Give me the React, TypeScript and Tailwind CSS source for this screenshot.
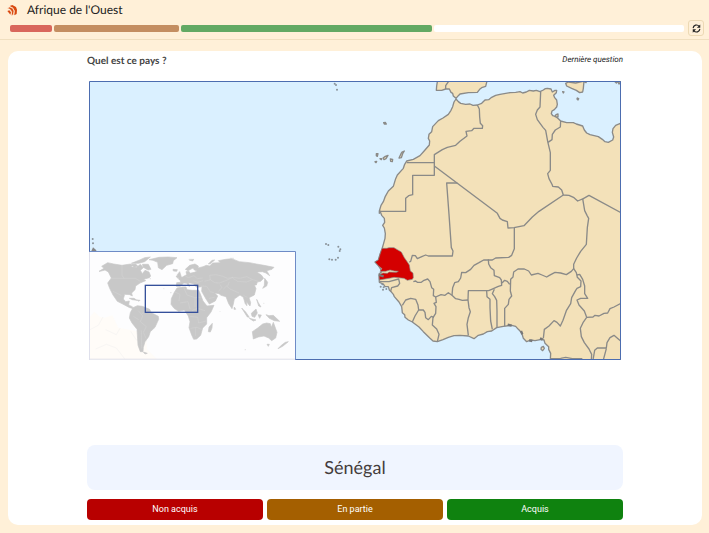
import React, { useState } from 'react';

type Segment = {
  name: string;
  className: string;
};

const SEGMENTS: Segment[] = [
  { name: 'non-acquis', className: 'grow-1 bg-[#d9675c]' },
  { name: 'en-partie', className: 'grow-3 bg-[#c48e61]' },
  { name: 'acquis', className: 'grow-6 bg-[#63a963]' },
  { name: 'reste', className: 'grow-6 bg-white' },
];

const REPONSES = [
  { label: 'Non acquis', className: 'bg-[#b80000]' },
  { label: 'En partie', className: 'bg-[#a45f00]' },
  { label: 'Acquis', className: 'bg-[#0f820f]' },
];

const AFRIQUE =
  'M1101 54L1108 62L1115 67L1130 70L1143 69L1152 73L1165 72L1178 67L1188 57L1199 56L1208 49L1220 43L1233 40L1263 35L1280 34L1293 32L1301 36L1312 33L1321 28L1333 30L1342 28L1353 32L1363 27L1369 23L1375 22L1386 24L1390 33L1398 28L1403 28L1402 35L1394 43L1397 50L1403 57L1405 70L1403 78L1396 86L1389 90L1387 98L1391 104L1399 106L1408 113L1415 120L1433 125L1453 125L1462 129L1481 135L1486 147L1493 156L1503 161L1528 167L1540 175L1548 182L1558 184L1571 177L1574 168L1570 154L1572 143L1580 133L1596 126V837H1384L1385 817L1379 805L1379 797L1368 787L1365 777L1358 775L1338 779L1325 777L1313 782L1303 772L1298 755L1288 745L1280 736L1268 733L1243 736L1223 740L1208 750L1195 752L1183 759L1168 763L1155 773L1138 765L1113 763L1095 764L1078 769L1062 776L1045 782L1032 780L1023 772L1003 752L990 738L970 723L958 717L948 709L947 701L940 695L938 677L930 663L916 647L913 640L908 634L901 627L898 617L888 617L883 609L871 604L870 579L878 572L875 564L868 554L858 543L868 537L873 520L879 504L883 490L888 472L889 458L886 441L881 433L887 424L886 412L878 403L873 390L871 397L871 390L876 373L883 362L889 346L898 330L913 316L920 293L925 282L943 262L947 250L953 240L973 235L993 224L1008 207L1021 192L1022 180L1018 172L1020 160L1028 152L1031 137L1048 119L1062 111L1078 100L1086 88L1091 77L1095 63Z';

const IBERIE =
  'M1046 -4L1043 15L1042 28L1058 28L1070 24L1081 24L1086 34L1091 37L1093 45L1101 52L1108 44L1113 39L1138 35L1165 34L1172 25L1178 20L1190 16L1195 -4Z';

const SENEGAL =
  'M858 543L868 537L873 520L879 502L893 502L900 500L915 500L925 506L937 513L946 530L953 540L961 552L964 570L972 576L973 590L970 595L955 598L945 592L915 589L905 591L871 597L870 581L882 576L895 577L900 573L922 574L928 571L916 570L903 567L890 571L873 571L879 563L868 554Z';

// Frontières terrestres
const FRONTIERES = [
  'M1081 -2L1070 14L1070 24',
  'M1165 72L1171 84L1172 108L1174 127L1181 134L1180 142L1155 142L1148 149L1131 151L1134 165L1113 181L1100 193L1075 199L1060 206L1036 221V283H971V341L959 344L950 352V391H871',
  'M953 245H1036M1036 255L1225 397L1233 412L1240 417L1255 422L1257 441L1275 440L1305 434L1330 408L1350 391L1423 342',
  'M1105 306H1073L1080 400L1087 500L1092 510L1090 525H1018L1010 522L1000 526L985 533L979 524L970 523L965 541L961 544',
  'M1355 32L1353 78L1345 87L1340 100L1345 116L1362 139L1370 148L1376 181L1384 215L1384 268L1376 278L1380 293L1390 312L1391 316L1408 318L1418 327L1423 342L1440 343L1455 350L1466 360L1483 353L1500 343L1596 395',
  'M1415 120L1414 138L1399 147L1390 160L1389 176L1377 184',
  'M1481 353L1487 389L1494 403L1499 412L1495 440L1492 490L1475 511L1463 531L1454 550L1454 563L1447 571L1432 581L1415 576L1398 574L1381 583L1373 588L1359 582L1347 577L1327 582L1319 570L1306 564L1287 564L1274 573L1272 588L1265 595L1264 630L1268 645L1260 655L1258 670L1247 682V736',
  'M1276 441V503L1268 523L1259 529L1220 531L1210 537H1184L1170 545L1155 553L1145 565L1130 575L1118 574L1115 591L1108 602L1097 605L1091 620L1089 643',
  'M1198 535L1199 549L1205 560L1215 568L1216 584L1232 590L1237 597L1238 613L1228 616L1208 625L1199 629H1138L1137 657',
  'M1239 606L1247 598L1255 601L1262 610M1216 625L1210 638L1217 647L1223 658L1224 690V740',
  'M1193 630L1194 647L1203 655L1203 680L1205 720L1210 745',
  'M1137 657L1140 680L1144 692L1138 710L1134 730L1138 763',
  'M1089 643L1100 653L1110 655L1120 658L1137 657M1089 643L1078 635L1068 643L1056 641L1040 648L1033 644L1034 625L1028 620L1023 602L1016 594L1005 598L997 604L985 604L980 600L973 602',
  'M1040 648L1042 664L1035 667L1041 677L1040 697L1032 710L1030 732L1043 744L1050 760L1045 782',
  'M940 673L950 657L965 652L980 655L987 672L989 687L978 705L970 723M989 687H1003L1008 694L1010 710L1018 716L1027 706L1035 709',
  'M873 602H900L929 594L932 607L926 615L908 620L905 630',
  'M1363 772L1366 745L1380 735L1395 719L1404 724L1414 735L1422 718L1432 689L1445 668L1448 650L1460 628L1464 622L1475 617L1476 600L1465 589L1462 575L1454 563',
  'M1464 582L1472 580L1481 595L1487 615L1487 638L1496 652H1475L1464 657L1470 672L1486 690L1493 709L1512 708L1518 703L1530 705L1545 697L1556 696L1563 683L1575 678L1596 667',
  'M1493 709L1482 725L1474 742L1477 767L1486 785L1500 804L1508 820L1507 837M1512 837L1517 808L1525 801H1552L1554 785L1563 770L1575 763L1587 773L1596 781M1552 803L1543 837',
  'M1385 833L1415 832L1430 829L1450 833H1480',
];

const ILES = [
  'M1430 7L1438 3L1460 6L1485 0L1483 22L1481 33L1472 35L1462 28L1448 22L1433 15Z',
  'M1401 101L1407 99L1407 108L1398 107Z',
  'M1465 51L1469 53L1467 57L1464 54Z',
  'M1421 32L1425 33L1423 36Z',
  'M884 125L889 124L892 129L886 129Z',
  'M862 218L867 218L865 226L862 224Z',
  'M858 242L863 241L861 245Z',
  'M873 233L878 233L877 236Z',
  'M882 231L889 226L897 223L891 233L885 236Z',
  'M904 234L911 235L910 242L905 241Z',
  'M930 231L936 218L939 213L946 210L941 218L937 230Z',
  'M1357 799L1363 796L1366 802L1361 809L1356 805Z',
  'M1485 -1L1493 -1L1491 5L1486 3Z',
  'M1575 -1L1596 1L1590 9L1586 1L1582 6Z',
];

const ILOTS = [
  [737, 8], [741, 12], [744, 26], [711, 489], [718, 492], [748, 497], [754, 505],
  [752, 510], [747, 530], [740, 536], [729, 536], [721, 535],
  [11, 474], [12, 487], [880, 610], [875, 617], [884, 619], [892, 624], [882, 626],
];

// Planisphère de la vignette
const CONTINENTS = [
  // Amérique du Nord
  'M57 109L72 100L65 94L83 83L101 87L126 91L151 87L159 91L153 96L170 97L181 88L190 98L181 106L187 116L195 106L207 111L212 123L208 128L191 133L197 137L180 144L167 153L165 164L155 174L157 183L149 179L134 178L130 192L137 200L148 198L146 210L157 215L160 221L149 218L128 207L112 199L99 180L89 160L83 144L94 129L85 111L75 105L60 109Z',
  'M154 85L179 75L194 68L211 66L194 80L176 85ZM187 88L205 88L213 103L204 105L190 97ZM156 88L167 87L174 94L161 97Z',
  'M207 74L237 67L265 66L291 68L280 77L278 86L260 91L246 104L235 98L233 82L219 76Z',
  // Amérique du Sud
  'M159 218L172 212L187 214L209 223L214 233L235 244L236 253L225 277L211 290L206 305L195 320L190 337L189 350L181 350L174 331L171 283L156 264L148 249L151 233Z',
  'M190 351L202 355L195 357ZM148 190L162 190L171 196L157 194ZM171 195L180 196L177 199Z',
  // Afrique
  'M291 159L309 156L318 156L321 164L337 166L356 166L361 177L369 198L381 213L402 211L393 231L380 248L380 267L368 279L362 301L350 312L341 313L335 300L327 278L330 260L325 243L313 225L296 229L282 220L273 208L274 191L283 172Z',
  'M397 265L396 279L391 291L385 290L387 276Z',
  // Europe et Asie
  'M289 154L290 143L302 142L299 131L311 124L320 119L318 110L327 109L330 115L343 112L352 108L343 105L339 99L324 107L316 103L329 91L345 87L355 93L354 99L369 95L379 91L389 93L398 84L421 83L415 77L437 73L455 71L478 80L509 83L529 87L552 91L582 97L576 103L560 107L569 122L558 114L547 110L530 111L544 120L551 130L542 139L532 141L529 150L523 150L528 161L523 180L507 188L512 203L510 213L503 205L499 199L501 212L496 207L490 187L480 180L463 192L460 207L456 221L446 206L438 185L423 181L417 176L404 174L413 183L406 198L388 207L378 192L365 169L366 155L350 157L340 146L326 143L328 155L320 145L311 144L301 154Z',
  'M292 119L299 110L306 132L297 134ZM288 123L294 122L293 130ZM279 103L292 104L290 109L280 108ZM328 75L341 73L338 78ZM385 87L396 76L404 75L391 86ZM554 130L563 142L560 153L548 160L553 151ZM463 216L467 223L462 223Z',
  // Océanie
  'M485 219L497 231L508 247L502 246ZM508 250L528 255L520 258ZM514 235L528 222L532 234L524 247L516 244ZM534 239L544 240L539 250ZM530 193L535 203L543 216L536 213ZM558 239L567 242L580 241L599 259L583 257L568 250Z',
  'M517 290L533 279L548 267L560 264L571 266L574 277L580 262L591 292L587 309L575 317L566 309L552 303L535 306L520 312ZM561 328L568 328L565 334ZM616 322L625 320L608 334L594 341L604 331Z',
];

const FRONTIERES_MONDE =
  'M92 130H166L181 139M126 91V121L132 130M99 169L124 181M175 227L188 243L181 260L199 275L190 292L198 310M160 244L176 254M212 235L200 231L185 236M184 286L185 340M285 171L300 178L297 198M311 157L321 180L345 188V216M300 204L324 200L330 222M345 188L362 187M336 227L353 220L375 227M330 244L353 247L356 264L378 258M332 280L351 277L365 283M347 277V303M316 123L325 128L342 122L352 131L368 129M326 109L334 100M340 137L353 142L369 137M364 153L380 154L389 167M374 139L391 134L389 121L409 119L428 124L443 130L459 127L479 130L500 125L518 134L535 139M391 134L404 143L418 144L437 137L459 127M415 170L425 158L421 149M430 162L440 153L450 162L477 174M448 140L443 153M459 130L473 139L499 141L518 134M389 170L402 173M387 190L404 187M490 181L502 187';

const CarteDuMonde = () => (
  <g>
    <rect x="1" y="512" width="619" height="324" fill="#fdfdfe" />
    <path
      d="M1 710L16 692L32 707L45 711L70 703L88 740L142 750L172 778L174 805L204 835H1Z"
      fill="#fffcf8"
    />
    <path
      d="M1 747L28 733L42 708M50 746L82 761L93 742M20 804L52 790L82 801L109 836M125 751L142 777L174 780"
      fill="none"
      stroke="#f8f6f4"
      strokeWidth="3"
    />
    <g transform="translate(-27 462)">
      {CONTINENTS.map((d) => (
        <path key={d} d={d} fill="#c8c8c8" stroke="#c8c8c8" strokeWidth="2" />
      ))}
      <path d={FRONTIERES_MONDE} fill="none" stroke="#dcdcdc" strokeWidth="1" />
      <path
        d="M209 131h4M250 161h3M270 173h5M326 73h12M450 70h12M550 205h3M494 344h4M420 229v2"
        stroke="#d8d8d8"
        strokeWidth="2"
      />
    </g>
    <rect x="169" y="613" width="157" height="81" fill="none" stroke="#35509b" strokeWidth="4" />
    <path d="M1 834.500H620" stroke="#e3e1e9" strokeWidth="3" />
    <path d="M1.500 512V837" stroke="#dfe0ec" strokeWidth="3" />
    <path d="M0 511.500H619.500V837" fill="none" stroke="#6e8bc6" strokeWidth="3" />
  </g>
);

const Carte = () => (
  <svg viewBox="0 0 1596 837" className="block w-full" role="img" aria-label="Carte">
    <rect width="1596" height="837" fill="#daf0ff" />
    <g fill="#f3e1b9" stroke="#8a8a88" strokeWidth="4" strokeLinejoin="round">
      <path d={AFRIQUE} />
      <path d={IBERIE} />
      {ILES.map((d) => (
        <path key={d} d={d} />
      ))}
      {FRONTIERES.map((d) => (
        <path key={d} d={d} fill="none" />
      ))}
      <path d={SENEGAL} fill="#d40000" strokeWidth="2" />
    </g>
    {ILOTS.map(([x, y]) => (
      <circle key={`${x}-${y}`} cx={x} cy={y} r="3" fill="#8a9299" />
    ))}
    <path d="M7 510L12 499L22 508V511Z" fill="#858585" />
    <path
      d="M1296 750l4 10M1320 778l10 2M1353 772l8 4M1256 731l12 3M870 582l14 4"
      stroke="#777"
      strokeWidth="7"
    />
    <CarteDuMonde />
    <path d="M1.500 511V1.500H1594.500V835.500H620" fill="none" stroke="#4c6db0" strokeWidth="3" />
  </svg>
);

const Logo = () => (
  <svg viewBox="0 0 30 33" className="h-[11px] w-[10px]" aria-hidden="true">
    <path d="M8 3L16 0L27 6L30 14L29 27L22 31L23 17L18 8Z" fill="#d9480f" />
    <path d="M1 10L8 6L17 10L21 18L19 29L13 32L14 20L9 13Z" fill="#d9480f" stroke="#fff0d8" strokeWidth="2" />
    <path d="M1 18L7 16L12 22L10 29L6 24Z" fill="#d9480f" />
  </svg>
);

const IconeRecommencer = () => (
  <svg viewBox="0 0 24 24" className="size-[9px]" fill="none" stroke="#222" strokeWidth="3" aria-hidden="true">
    <path d="M3 11A9 9 0 0 1 19 6M21 13A9 9 0 0 1 5 18" />
    <path d="M22 1V10H13ZM2 23V14H11Z" fill="#222" stroke="none" />
  </svg>
);

const App: React.FC = () => {
  const [reponse, setReponse] = useState<string>('');

  return (
    <div className="flex min-h-screen flex-col bg-[#fff0d8] font-['Roboto',sans-serif] [text-rendering:geometricPrecision]">
      <header className="border-b border-[#f0dfbf] pb-[3px]">
        <div className="flex h-5 items-center gap-[10px] pl-[7px]">
          <Logo />
          <h1 className="font-['Lato',sans-serif] text-[12px] leading-5 text-[#222]">
            Afrique de l'Ouest
          </h1>
        </div>
        <div className="flex items-center gap-1 pr-[5px] pl-[10px]">
          <div className="flex h-[7px] flex-1 gap-[2px]">
            {SEGMENTS.map((segment) => (
              <div key={segment.name} className={`basis-0 rounded-[2px] ${segment.className}`} />
            ))}
          </div>
          <button
            aria-label="Recommencer"
            onClick={() => setReponse('')}
            className="flex size-4 items-center justify-center rounded-[3px] border border-[#ecd9b4]"
          >
            <IconeRecommencer />
          </button>
        </div>
      </header>

      <main className="mt-[11px] mr-[7px] mb-2 ml-2 flex flex-1 flex-col rounded-[10px] bg-white">
        <div className="mx-auto flex w-full max-w-[536px] flex-1 flex-col pb-[5px]">
          <div className="flex items-start justify-between pt-[3px]">
            <h2 className="font-['Lato',sans-serif] text-[10px] leading-[14px] font-bold text-[#444]">
              Quel est ce pays ?
            </h2>
            <p className="text-[8px] leading-3 text-[#222] italic">Dernière question</p>
          </div>

          <div className="mt-[13px] px-[2px]">
            <Carte />
          </div>

          <p className="mt-auto rounded-lg bg-[#f0f5ff] text-center font-['Lato',sans-serif] text-[18px] leading-[45px] text-[#443c3c]">
            Sénégal
          </p>
          <div className="mt-[9px] grid grid-cols-3 gap-1">
            {REPONSES.map(({ label, className }) => (
              <button
                key={label}
                aria-pressed={reponse === label}
                onClick={() => setReponse(label)}
                className={`h-[21px] rounded-[4px] text-[9px] text-white ${className}`}
              >
                {label}
              </button>
            ))}
          </div>
        </div>
      </main>
    </div>
  );
};

export default App;
